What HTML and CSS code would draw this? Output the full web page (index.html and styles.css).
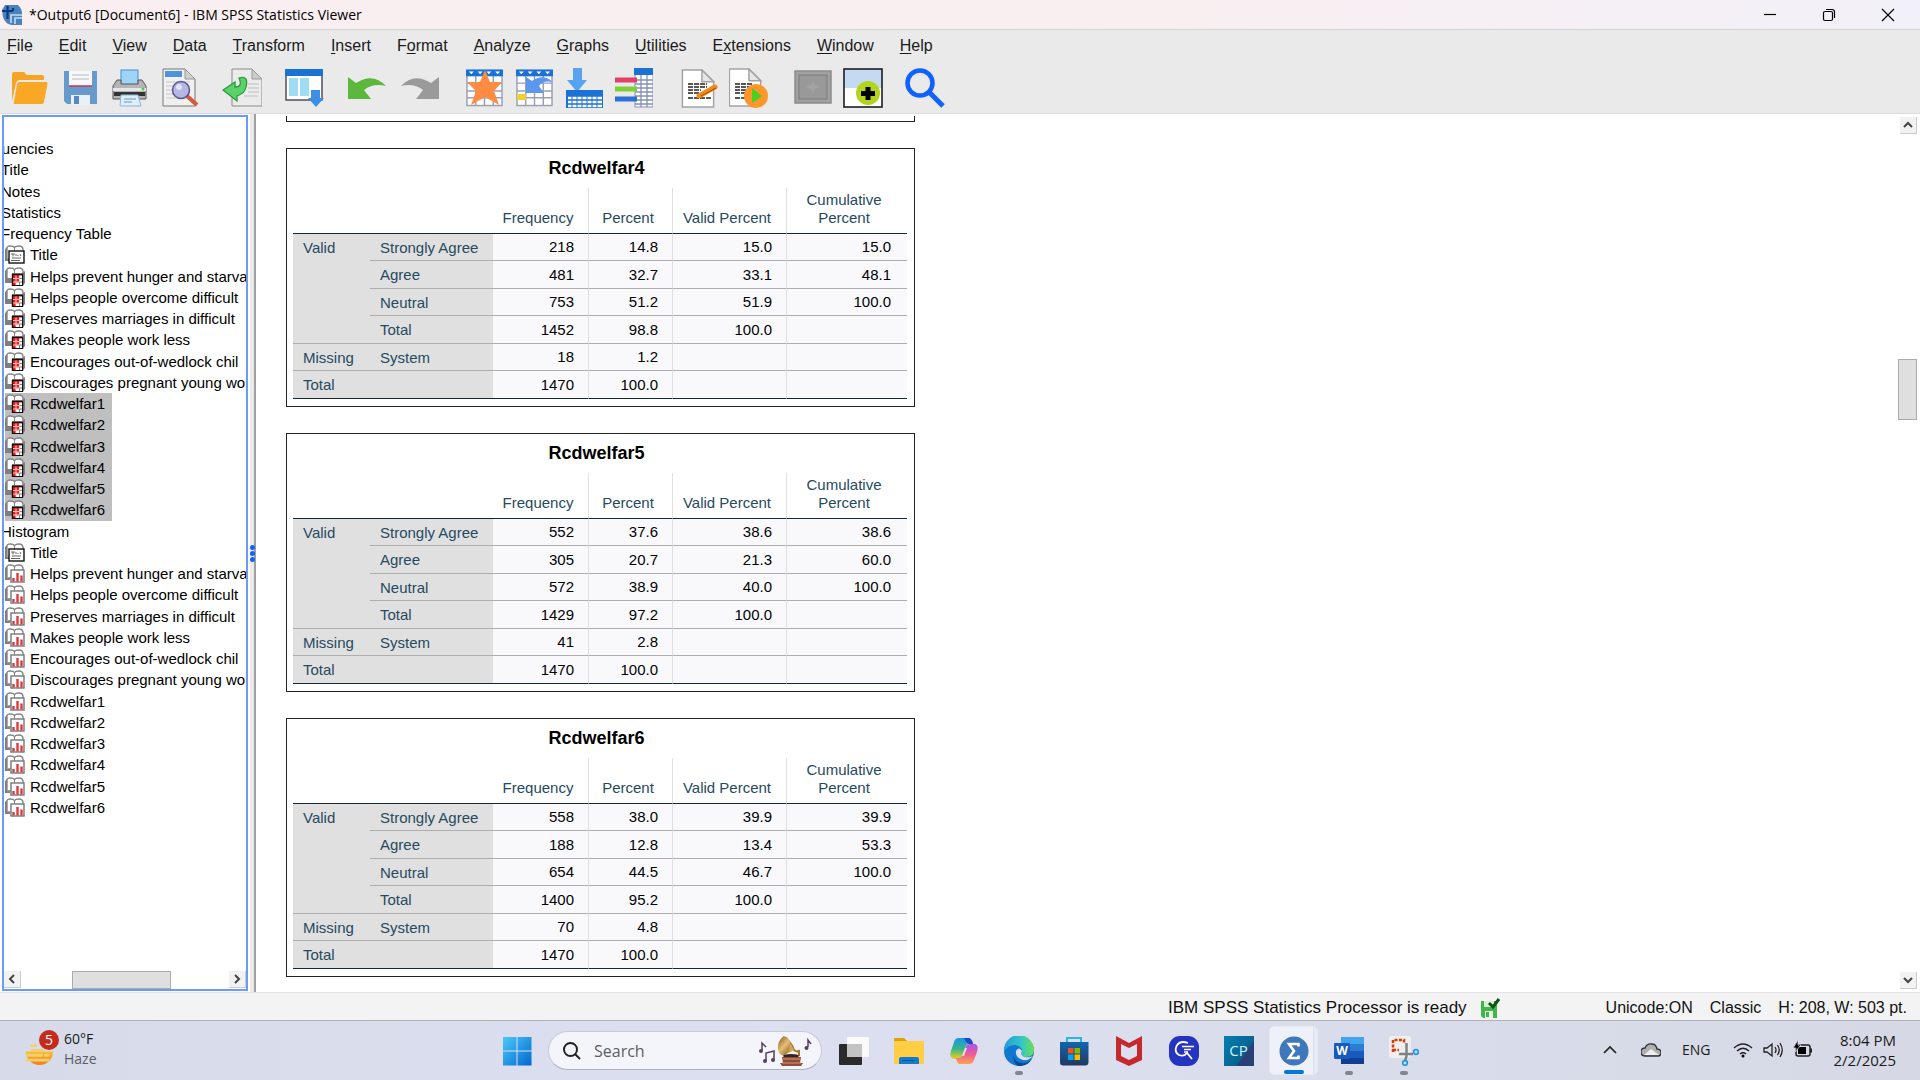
FILE: index.html
```html
<!DOCTYPE html>
<html lang="en">
  <head>
    <meta charset="UTF-8" />
    <meta name="viewport" content="width=device-width, initial-scale=1.0" />
    <title>*Output6 [Document6] - IBM SPSS Statistics Viewer</title>
    <link rel="stylesheet" href="styles.css">
  </head>
  <body>
    <!-- shared symbols -->
    <svg class="defs" aria-hidden="true">
      <symbol id="book" viewBox="0 0 20 19">
        <path d="M0 4 L2 2 V13 H5 V16 H0 Z" fill="#7f7f7f" />
        <path d="M2 13 V3 Q2 1 5 1 Q9 1 9.500 3 Q10 1 14 1 Q17.500 1 18 4 V14 H2" fill="#fff" stroke="#858585" stroke-width="1.400" />
        <path d="M9.500 3 V12" stroke="#858585" />
      </symbol>
      <symbol id="node-title" viewBox="0 0 20 19">
        <use href="#book" width="20" height="19" />
        <rect x="4" y="6" width="15" height="12" fill="#fff" stroke="#111" stroke-width="1.400" />
        <path d="M6 9 H10 M8 9 V11.500 M11 9 V11 M12.500 10 L13.500 11 M15 9 L16 11 M7 13 H16 M6 15.500 H15" stroke="#666" fill="none" />
      </symbol>
      <symbol id="node-table" viewBox="0 0 20 19">
        <use href="#book" width="20" height="19" />
        <path d="M0 11 H7 V16 H0 Z" fill="#7f7f7f" />
        <path d="M7 6 H17 L20 4 V16 L17 19 H7 Z" fill="#7f7f7f" />
        <rect x="7.500" y="7.500" width="10" height="11" fill="#ff1a1a" stroke="#111" stroke-width="1.400" />
        <path d="M14.500 8.500 H17 V18 H11 V15.500 H14.500 Z" fill="#fff" />
        <path d="M8 11.500 H17 M8 15 H17 M11 8.500 V18 M14.500 8.500 V18" stroke="#f4dede" stroke-width=".9" />
        <path d="M14.500 11.500 H17 M14.500 15 H17 M14.500 15 V18" stroke="#777" stroke-width=".9" />
      </symbol>
      <symbol id="node-chart" viewBox="0 0 20 19">
        <use href="#book" width="20" height="19" />
        <rect x="6" y="6" width="13" height="12" fill="#fff" stroke="#777" stroke-width="1.400" />
        <path d="M8.500 17.500 V14 M12.500 17.500 V9 M16.500 17.500 V11.500" stroke="#dd3b3b" stroke-width="2.400" />
      </symbol>
      <symbol id="grid" viewBox="0 0 38 38">
        <rect x="1" y="1" width="36" height="36" fill="#fff" stroke="#9a9fb5" stroke-width="1.500" />
        <path d="M1 14 H37 M1 22 H37 M1 29 H37 M10 5 V37 M19 5 V37 M28 5 V37" stroke="#9a9fb5" stroke-width="1.500" />
        <rect width="38" height="7" fill="#1a72d6" />
        <path d="M3 2 H8 L5.500 5 Z M12 2 H17 L14.500 5 Z M21 2 H26 L23.500 5 Z M30 2 H35 L32.500 5 Z" fill="#fff" />
      </symbol>
      <symbol id="paper" viewBox="0 0 34 40">
        <path d="M1 1 H21 L33 13 V39 H1 Z" fill="#fff" stroke="#a3a3a3" stroke-width="1.500" />
        <path d="M21 1 V13 H33 Z" fill="#e6e6e6" stroke="#a3a3a3" stroke-width="1.500" />
      </symbol>
    </svg>

    <header class="titlebar">
      <svg class="app-icon" viewBox="0 0 20 20">
        <path d="M3 0 H16 Q20 4 20 8 V20 H10 Q3 19 1 12 L0 5 Z" fill="#4a82bd" />
        <path d="M0 6 H11 M5.500 1 V14 M11 6 V3" stroke="#0d3a78" stroke-width="2.200" fill="none" />
        <path d="M9 18 V10 H20 M13 19 V13 H20" stroke="#c4dcf2" stroke-width="1.600" fill="none" />
      </svg>
      <h1>*Output6 [Document6] - IBM SPSS Statistics Viewer</h1>
      <div class="window-buttons">
        <button aria-label="Minimize"><svg viewBox="0 0 14 14"><path d="M1 6.500 H13" /></svg></button>
        <button aria-label="Restore"><svg viewBox="0 0 14 14"><rect x="1.500" y="3.500" width="9" height="9" rx="1.500" /><path d="M4 1.500 H10 Q12.500 1.500 12.500 4 V10" /></svg></button>
        <button aria-label="Close"><svg viewBox="0 0 14 14"><path d="M1 1 L13 13 M13 1 L1 13" /></svg></button>
      </div>
    </header>

    <nav class="menubar">
      <button><u>F</u>ile</button>
      <button><u>E</u>dit</button>
      <button><u>V</u>iew</button>
      <button><u>D</u>ata</button>
      <button><u>T</u>ransform</button>
      <button><u>I</u>nsert</button>
      <button>F<u>o</u>rmat</button>
      <button><u>A</u>nalyze</button>
      <button><u>G</u>raphs</button>
      <button><u>U</u>tilities</button>
      <button>E<u>x</u>tensions</button>
      <button><u>W</u>indow</button>
      <button><u>H</u>elp</button>
    </nav>

    <div class="toolbar">
      <div class="group">
        <button aria-label="Open">
          <svg viewBox="0 0 40 40">
            <path d="M2 33 V6 Q2 4 4 4 H14 L17 7 H32 Q34 7 34 9 V12 H10 Q7 12 6 15 Z" fill="#f7a325" />
            <path d="M9 14 H36 Q38 14 37.500 16 L34 34 Q33.500 36 32 36 H5 Q3 36 4 34 L7 16 Q7.500 14 9 14 Z" fill="#f9a826" />
          </svg>
        </button>
        <button aria-label="Save">
          <svg viewBox="0 0 40 40">
            <path d="M4 3 H37 V36 H7 L4 33 Z" fill="#6699cc" />
            <rect x="9" y="3" width="23" height="15" fill="#f6f8fa" />
            <path d="M12 7 H29 M12 11 H29" stroke="#c9ced3" stroke-width="1.500" />
            <path d="M9 18 H32" stroke="#cc3355" stroke-width="1.500" />
            <rect x="11" y="27" width="19" height="10" fill="#e8f0f8" />
            <rect x="14" y="28" width="5" height="8" fill="#5588c0" />
          </svg>
        </button>
        <button aria-label="Print">
          <svg viewBox="0 0 40 40">
            <rect x="11" y="2" width="17" height="15" fill="#9fd4f8" stroke="#4590cc" />
            <path d="M7 12 H11 V16 H28 V12 H32 L36 18 V31 H3 V18 Z" fill="#b5b5b5" stroke="#555" />
            <path d="M3 20 H36 V23 H3 Z" fill="#e6e6e6" />
            <path d="M4 26 H35" stroke="#333" stroke-width="4" />
            <path d="M11 27 H28 L31 38 H10 Z" fill="#dceefb" stroke="#8fb5d2" />
            <path d="M14 31 H26 M14 34 H22" stroke="#6d97b5" />
            <circle cx="33" cy="21" r="1.500" fill="#4c4" />
          </svg>
        </button>
        <button aria-label="Print Preview">
          <svg viewBox="0 0 40 40">
            <path d="M3 1 H25 L35 11 V38 H3 Z" fill="#f0f0f0" stroke="#777" />
            <path d="M25 1 V11 H35 Z" fill="#d0d0d0" stroke="#999" />
            <rect x="5" y="3" width="17" height="6" fill="#4b94dc" />
            <path d="M6 14 H30 M6 18 H30 M6 22 H30 M6 26 H28 M6 30 H28" stroke="#c9c9c9" />
            <path d="M27 28 L37 37" stroke="#d9583a" stroke-width="4" />
            <circle cx="21" cy="22" r="8.500" fill="#b4b6e4" stroke="#55568f" stroke-width="1.500" />
            <circle cx="19" cy="19" r="3" fill="#e3e4f8" />
          </svg>
        </button>
      </div>
      <div class="group">
        <button aria-label="Export">
          <svg viewBox="0 0 40 40">
            <path d="M10 1 H30 L40 11 V38 H10 Z" fill="#ebebeb" stroke="#8a8a8a" />
            <path d="M30 1 V11 H40 Z" fill="#ccc" stroke="#999" />
            <path d="M26 16 H37 M26 20 H37 M26 24 H37 M22 28 H36" stroke="#bdbdbd" />
            <path d="M17 10 Q27 7 24 19 Q23 25 15 28 V33 L1 22 L13 14 V19 Q21 19 17 10 Z" fill="#5bd268" stroke="#2a9a3c" stroke-width="1.300" />
          </svg>
        </button>
      </div>
      <div class="group">
        <button aria-label="Recall Dialog">
          <svg viewBox="0 0 40 40">
            <rect x="2" y="2" width="36" height="30" fill="#fff" stroke="#445" stroke-width="1.400" />
            <rect x="1" y="1" width="38" height="7" fill="#1a72d6" />
            <rect x="5" y="10" width="9" height="18" fill="#a0dcf4" />
            <rect x="16" y="10" width="9" height="18" fill="#a0dcf4" />
            <path d="M27 22 H36 V30 H40 L32 39 L24 30 H27 Z" fill="#3b8fe8" />
          </svg>
        </button>
      </div>
      <div class="group history">
        <button aria-label="Undo">
          <svg viewBox="0 0 40 40"><path d="M2 9 L10 15 Q27 4 40 18 Q27 15 18 22 L25 31 H2 Z" fill="#5bb83c" /></svg>
        </button>
        <button aria-label="Redo">
          <svg viewBox="0 0 40 40"><path d="M38 9 L30 15 Q13 4 0 18 Q13 15 22 22 L15 31 H38 Z" fill="#9a9a9a" /></svg>
        </button>
      </div>
      <div class="group">
        <button aria-label="Go to Data">
          <svg viewBox="0 0 40 40">
            <use href="#grid" x="3" y="1" width="37" height="38" />
            <path d="M22 2 L27 14 H39 L31 23 L36 37 L22 29 L8 37 L13 23 L4 14 H17 Z" fill="#ff8c42" />
          </svg>
        </button>
        <button aria-label="Go to Case">
          <svg viewBox="0 0 40 40">
            <use href="#grid" x="3" y="1" width="37" height="38" />
            <rect x="4" y="26" width="9" height="6" fill="#f0d030" />
            <path d="M13 9 L19 13 Q30 5 40 14 Q30 12 26 18 L31 25 H13 Z" fill="#5c97ec" />
          </svg>
        </button>
        <button aria-label="Go to Variable">
          <svg viewBox="0 0 40 40">
            <path d="M10 0 H19 V12 H24 L14 24 L4 12 H10 Z" fill="#58a3f0" />
            <rect x="3" y="22" width="37" height="18" fill="#1a72d6" />
            <path d="M5 30 H39 M5 34 H39 M5 38 H39" stroke="#fff" stroke-width="2.500" />
            <path d="M9 28 V40 M14 28 V40 M19 28 V40 M24 28 V40 M29 28 V40 M34 28 V40" stroke="#1a72d6" />
          </svg>
        </button>
        <button aria-label="Variables">
          <svg viewBox="0 0 40 40">
            <rect x="22" y="1" width="18" height="38" fill="#fff" stroke="#8490b5" />
            <path d="M22 12 H40 M22 16 H40 M22 20 H40 M22 24 H40 M22 28 H40 M22 32 H40 M22 36 H40 M28 7 V39 M34 7 V39" stroke="#8490b5" stroke-width="1.300" />
            <rect x="21" width="20" height="7" fill="#1a72d6" />
            <path d="M2 12 H24" stroke="#e24068" stroke-width="5" />
            <path d="M2 21 H24" stroke="#7cd038" stroke-width="5" />
            <path d="M2 31 H24" stroke="#2c6fd6" stroke-width="5" />
          </svg>
        </button>
      </div>
      <div class="group docs">
        <button aria-label="Edit Syntax">
          <svg viewBox="0 0 40 40">
            <use href="#paper" x="2" y="1" width="34" height="39" />
            <path d="M9 16 H28 M9 19 H28 M9 22 H22 M9 25 H20 M9 30 H32" stroke="#222" stroke-width="1.500" stroke-dasharray="5 1" />
            <path d="M20 28 L36 19" stroke="#f08a18" stroke-width="5" stroke-linecap="round" />
            <path d="M22 28 L37 20" stroke="#a34a12" />
          </svg>
        </button>
        <button aria-label="Run Script">
          <svg viewBox="0 0 40 40">
            <use href="#paper" x="-1" y="0" width="34" height="39" />
            <path d="M6 16 H24 M6 19 H22 M6 22 H20 M6 25 H18 M6 30 H20" stroke="#222" stroke-width="1.500" stroke-dasharray="5 1" />
            <circle cx="27" cy="28" r="12" fill="#ff962c" />
            <path d="M23 20 L33 28 L23 35 Z" fill="#46d21e" />
          </svg>
        </button>
      </div>
      <div class="group">
        <button aria-label="Designate Window" disabled>
          <svg viewBox="0 0 40 40">
            <rect x="2" y="3" width="36" height="32" fill="#a0a0a0" stroke="#8c8c8c" stroke-width="1.500" />
            <rect x="6" y="7" width="28" height="24" fill="#999" stroke="#7d7d7d" />
            <path d="M20 12 L22 17 L27 19 L22 21 L20 26 L18 21 L13 19 L18 17 Z" fill="#a3a3a3" />
          </svg>
        </button>
        <button aria-label="Insert">
          <svg viewBox="0 0 40 40">
            <rect x="1" y="1" width="38" height="38" fill="#fff" />
            <rect x="1" y="1" width="38" height="19" fill="#c4daf2" />
            <rect x="1" y="1" width="38" height="38" fill="none" stroke="#1c1c24" stroke-width="1.600" />
            <circle cx="25" cy="25" r="12" fill="#b4d41c" />
            <path d="M25 19 V32 M18 25.500 H32" stroke="#000" stroke-width="5" />
          </svg>
        </button>
      </div>
      <div class="group">
        <button aria-label="Search">
          <svg viewBox="0 0 40 40">
            <circle cx="15" cy="15" r="12.500" fill="none" stroke="#0f62fe" stroke-width="4.500" />
            <path d="M24 24 L38 38" stroke="#0f62fe" stroke-width="5" />
          </svg>
        </button>
      </div>
    </div>

    <main class="workspace">
      <aside class="outline">
        <ul class="tree">
          <li class="level-1"><span>Frequencies</span></li>
          <li class="level-2"><span>Title</span></li>
          <li class="level-2"><span>Notes</span></li>
          <li class="level-2"><span>Statistics</span></li>
          <li class="level-2"><span>Frequency Table</span></li>
          <li><span><svg><use href="#node-title" /></svg>Title</span></li>
          <li><span><svg><use href="#node-table" /></svg>Helps prevent hunger and starva</span></li>
          <li><span><svg><use href="#node-table" /></svg>Helps people overcome difficult</span></li>
          <li><span><svg><use href="#node-table" /></svg>Preserves marriages in difficult</span></li>
          <li><span><svg><use href="#node-table" /></svg>Makes people work less</span></li>
          <li><span><svg><use href="#node-table" /></svg>Encourages out-of-wedlock chil</span></li>
          <li><span><svg><use href="#node-table" /></svg>Discourages pregnant young wo</span></li>
          <li class="selected"><span><svg><use href="#node-table" /></svg>Rcdwelfar1</span></li>
          <li class="selected"><span><svg><use href="#node-table" /></svg>Rcdwelfar2</span></li>
          <li class="selected"><span><svg><use href="#node-table" /></svg>Rcdwelfar3</span></li>
          <li class="selected"><span><svg><use href="#node-table" /></svg>Rcdwelfar4</span></li>
          <li class="selected"><span><svg><use href="#node-table" /></svg>Rcdwelfar5</span></li>
          <li class="selected"><span><svg><use href="#node-table" /></svg>Rcdwelfar6</span></li>
          <li class="level-2"><span>Histogram</span></li>
          <li><span><svg><use href="#node-title" /></svg>Title</span></li>
          <li><span><svg><use href="#node-chart" /></svg>Helps prevent hunger and starva</span></li>
          <li><span><svg><use href="#node-chart" /></svg>Helps people overcome difficult</span></li>
          <li><span><svg><use href="#node-chart" /></svg>Preserves marriages in difficult</span></li>
          <li><span><svg><use href="#node-chart" /></svg>Makes people work less</span></li>
          <li><span><svg><use href="#node-chart" /></svg>Encourages out-of-wedlock chil</span></li>
          <li><span><svg><use href="#node-chart" /></svg>Discourages pregnant young wo</span></li>
          <li><span><svg><use href="#node-chart" /></svg>Rcdwelfar1</span></li>
          <li><span><svg><use href="#node-chart" /></svg>Rcdwelfar2</span></li>
          <li><span><svg><use href="#node-chart" /></svg>Rcdwelfar3</span></li>
          <li><span><svg><use href="#node-chart" /></svg>Rcdwelfar4</span></li>
          <li><span><svg><use href="#node-chart" /></svg>Rcdwelfar5</span></li>
          <li><span><svg><use href="#node-chart" /></svg>Rcdwelfar6</span></li>
        </ul>
        <div class="scroll-x">
          <button aria-label="Scroll left"><svg viewBox="0 0 10 10"><path d="M7 1 L3 5 L7 9" /></svg></button>
          <div class="track"><div class="thumb"></div></div>
          <button aria-label="Scroll right"><svg viewBox="0 0 10 10"><path d="M3 1 L7 5 L3 9" /></svg></button>
        </div>
      </aside>

      <div class="splitter"><i></i><i></i><i></i></div>

      <div class="output">
        <div class="pages">
          <div class="pivot previous"></div>

          <section class="pivot">
            <table>
              <caption>Rcdwelfar4</caption>
              <colgroup><col class="group-col"><col class="label-col"><col class="freq-col"><col class="percent-col"><col class="valid-col"><col></colgroup>
              <thead>
                <tr><td colspan="2"></td><th>Frequency</th><th>Percent</th><th>Valid Percent</th><th class="cumulative">Cumulative Percent</th></tr>
              </thead>
              <tbody>
                <tr><th rowspan="4">Valid</th><th>Strongly Agree</th><td>218</td><td>14.8</td><td>15.0</td><td>15.0</td></tr>
                <tr><th>Agree</th><td>481</td><td>32.7</td><td>33.1</td><td>48.1</td></tr>
                <tr><th>Neutral</th><td>753</td><td>51.2</td><td>51.9</td><td>100.0</td></tr>
                <tr><th>Total</th><td>1452</td><td>98.8</td><td>100.0</td><td></td></tr>
                <tr><th>Missing</th><th>System</th><td>18</td><td>1.2</td><td></td><td></td></tr>
                <tr><th colspan="2">Total</th><td>1470</td><td>100.0</td><td></td><td></td></tr>
              </tbody>
            </table>
          </section>

          <section class="pivot">
            <table>
              <caption>Rcdwelfar5</caption>
              <colgroup><col class="group-col"><col class="label-col"><col class="freq-col"><col class="percent-col"><col class="valid-col"><col></colgroup>
              <thead>
                <tr><td colspan="2"></td><th>Frequency</th><th>Percent</th><th>Valid Percent</th><th class="cumulative">Cumulative Percent</th></tr>
              </thead>
              <tbody>
                <tr><th rowspan="4">Valid</th><th>Strongly Agree</th><td>552</td><td>37.6</td><td>38.6</td><td>38.6</td></tr>
                <tr><th>Agree</th><td>305</td><td>20.7</td><td>21.3</td><td>60.0</td></tr>
                <tr><th>Neutral</th><td>572</td><td>38.9</td><td>40.0</td><td>100.0</td></tr>
                <tr><th>Total</th><td>1429</td><td>97.2</td><td>100.0</td><td></td></tr>
                <tr><th>Missing</th><th>System</th><td>41</td><td>2.8</td><td></td><td></td></tr>
                <tr><th colspan="2">Total</th><td>1470</td><td>100.0</td><td></td><td></td></tr>
              </tbody>
            </table>
          </section>

          <section class="pivot">
            <table>
              <caption>Rcdwelfar6</caption>
              <colgroup><col class="group-col"><col class="label-col"><col class="freq-col"><col class="percent-col"><col class="valid-col"><col></colgroup>
              <thead>
                <tr><td colspan="2"></td><th>Frequency</th><th>Percent</th><th>Valid Percent</th><th class="cumulative">Cumulative Percent</th></tr>
              </thead>
              <tbody>
                <tr><th rowspan="4">Valid</th><th>Strongly Agree</th><td>558</td><td>38.0</td><td>39.9</td><td>39.9</td></tr>
                <tr><th>Agree</th><td>188</td><td>12.8</td><td>13.4</td><td>53.3</td></tr>
                <tr><th>Neutral</th><td>654</td><td>44.5</td><td>46.7</td><td>100.0</td></tr>
                <tr><th>Total</th><td>1400</td><td>95.2</td><td>100.0</td><td></td></tr>
                <tr><th>Missing</th><th>System</th><td>70</td><td>4.8</td><td></td><td></td></tr>
                <tr><th colspan="2">Total</th><td>1470</td><td>100.0</td><td></td><td></td></tr>
              </tbody>
            </table>
          </section>
        </div>
        <div class="scroll-y">
          <button aria-label="Scroll up"><svg viewBox="0 0 10 10"><path d="M1 7 L5 3 L9 7" /></svg></button>
          <div class="track"><div class="thumb"></div></div>
          <button aria-label="Scroll down"><svg viewBox="0 0 10 10"><path d="M1 3 L5 7 L9 3" /></svg></button>
        </div>
      </div>
    </main>

    <footer class="statusbar">
      <span class="processor">IBM SPSS Statistics Processor is ready</span>
      <svg class="saved" viewBox="0 0 20 20">
        <path d="M0 3 H16 V20 H2 L0 18 Z" fill="#3fb54a" />
        <rect x="3" y="3" width="10" height="6" fill="#d5f0d5" />
        <rect x="4" y="13" width="8" height="7" fill="#e6f5e6" />
        <rect x="5" y="14" width="3" height="5" fill="#3fb54a" />
        <path d="M8 5 L12 9 L18 1" stroke="#0c5216" stroke-width="3" fill="none" />
      </svg>
      <div class="status-right">
        <span>Unicode:ON</span>
        <span>Classic</span>
        <span>H: 208, W: 503 pt.</span>
      </div>
    </footer>

    <div class="taskbar">
      <button class="weather">
        <span class="weather-icon">
          <svg viewBox="0 0 30 36">
            <defs>
              <linearGradient id="sun" x1="0" y1="0" x2="0" y2="1"><stop offset="0" stop-color="#fbc02d" /><stop offset="1" stop-color="#f57c14" /></linearGradient>
            </defs>
            <path d="M1 20 H29 A14 14 0 0 1 1 20 Z" fill="url(#sun)" />
            <path d="M7 14 H11 M7 19 H19 M2 24 H17 M21 24 H24 M2 29 H24" stroke="#f2cf70" stroke-width="3" stroke-linecap="round" />
          </svg>
          <b class="badge">5</b>
        </span>
        <span class="weather-text"><span>60°F</span><small>Haze</small></span>
      </button>

      <div class="apps">
        <button class="app" aria-label="Start">
          <svg viewBox="0 0 30 30">
            <defs><linearGradient id="win" x1="0" y1="0" x2="1" y2="1"><stop offset="0" stop-color="#4cc8fb" /><stop offset="1" stop-color="#0268cd" /></linearGradient></defs>
            <path d="M1 1 H14.500 V14.500 H1 Z M15.500 1 H29.500 V14.500 H15.500 Z M1 15.500 H14.500 V29.500 H1 Z M15.500 15.500 H29.500 V29.500 H15.500 Z" fill="url(#win)" />
          </svg>
        </button>
        <label class="search">
          <svg class="glass" viewBox="0 0 18 18"><circle cx="7.500" cy="7.500" r="6.500" /><path d="M12 12 L17 17" /></svg>
          <input type="text" placeholder="Search" aria-label="Search" />
          <svg class="gramophone" viewBox="0 0 54 32">
            <defs><linearGradient id="horn" x1="0" y1="0" x2="1" y2="1"><stop offset="0" stop-color="#8a5a1e" /><stop offset=".5" stop-color="#e5bf76" /><stop offset="1" stop-color="#8a5f20" /></linearGradient></defs>
            <path d="M4 15 V8 L8 12 M8 26 V18 L16 16 V25" stroke="#54405c" stroke-width="1.500" fill="none" />
            <circle cx="3" cy="16" r="2" fill="#54405c" /><circle cx="7" cy="26" r="2" fill="#54405c" /><circle cx="15" cy="25" r="2" fill="#54405c" />
            <path d="M50 12 V5 L53 9" stroke="#54405c" stroke-width="1.500" fill="none" /><circle cx="48.500" cy="13" r="2" fill="#54405c" />
            <path d="M25 2 Q33 6 36 15 Q40 18 41 15 V21" stroke="#a9762c" stroke-width="2" fill="none" />
            <path d="M25 2 Q32 5 36 15 Q30 19 25 20 Z" fill="#d3a656" />
            <ellipse cx="26" cy="11" rx="6" ry="9.500" fill="url(#horn)" transform="rotate(10 26 11)" />
            <ellipse cx="33" cy="21" rx="8" ry="2" fill="#33241e" />
            <path d="M24 22 H43 L42 28 H45 L43 31 H24 L22 28 H25 Z" fill="#8e4f34" />
            <path d="M25 24 H42 M24 28 H43" stroke="#d09a7a" />
          </svg>
        </label>
        <button class="app" aria-label="Task View">
          <svg viewBox="0 0 30 30">
            <rect y="8" width="23" height="21" rx="1" fill="#2b2b2b" />
            <rect x="8" y="1" width="22" height="20" rx="1" fill="#fafafa" />
            <rect x="8" y="8" width="15" height="13" fill="#c3c3c3" />
          </svg>
        </button>
        <button class="app" aria-label="File Explorer">
          <svg viewBox="0 0 30 30">
            <path d="M0 3 Q0 2 1 2 H10 L13 5 V9 H0 Z" fill="#e09f0a" />
            <rect y="5" width="30" height="23" rx="1" fill="#ffce45" />
            <path d="M5 28 V23 Q5 21 7 21 H23 Q25 21 25 23 V28 Z" fill="#0f7ccf" />
            <path d="M8 24.500 H21" stroke="#0a4f90" />
          </svg>
        </button>
        <button class="app" aria-label="Copilot">
          <svg viewBox="0 0 30 30">
            <defs>
              <linearGradient id="cop1" x1="0" y1="0" x2="0" y2="1"><stop offset="0" stop-color="#1797e8" /><stop offset=".5" stop-color="#36b58a" /><stop offset="1" stop-color="#f2cf1d" /></linearGradient>
              <linearGradient id="cop2" x1="0" y1="0" x2="0" y2="1"><stop offset="0" stop-color="#a259ee" /><stop offset=".5" stop-color="#ee5a97" /><stop offset="1" stop-color="#fca350" /></linearGradient>
            </defs>
            <path d="M10 2 H20 Q23 3 24 8 H20 Q17 8 16 12 L13 21 Q12 24 8 23 H4 Q0 21 2 15 L5 6 Q6 2 10 2 Z" fill="url(#cop1)" />
            <path d="M15 2 H20 Q23 3 24 8 H20 Q17 7 15 2 Z" fill="#2048c8" />
            <path d="M21 8 H26 Q30 9 28 16 L25 24 Q24 28 20 28 H10 Q8 27 7 22 H10 Q13 22 14 18 L17 10 Q18 8 21 8 Z" fill="url(#cop2)" />
            <path d="M16 12 H18 L15 20 H13 Z" fill="#dcdff0" />
          </svg>
        </button>
        <button class="app running" aria-label="Edge">
          <svg viewBox="0 0 30 30">
            <defs>
              <linearGradient id="edge1" x1="0" y1="0" x2="1" y2="0"><stop offset="0" stop-color="#1f9be0" /><stop offset=".6" stop-color="#35c7c4" /><stop offset="1" stop-color="#6be04c" /></linearGradient>
            </defs>
            <circle cx="15" cy="15" r="15" fill="#1078cf" />
            <path d="M0 14 A15 15 0 0 1 30 14 Q30 21 22 21 Q17 21 18 17 Q19 10 11 9 Q4 9 0 15 Z" fill="url(#edge1)" />
            <path d="M10 18 Q9 26 18 27 Q23 28 28 23 A15 15 0 0 1 14 30 Q8 26 10 18 Z" fill="#0c4a94" />
            <path d="M18 15 Q15 10 12 15 Q11 22 19 24 Q25 25 29 20 Q25 22 21 21 Q16 20 18 15 Z" fill="#dcdff0" />
          </svg>
        </button>
        <button class="app" aria-label="Microsoft Store">
          <svg viewBox="0 0 30 30">
            <defs><linearGradient id="store" x1="0" y1="0" x2="0" y2="1"><stop offset="0" stop-color="#1265ae" /><stop offset="1" stop-color="#22395f" /></linearGradient></defs>
            <path d="M8 7 V2 H22 V7" fill="none" stroke="#27b7ee" stroke-width="2" />
            <path d="M1 6 H29.500 V26 Q29.500 29.500 26 29.500 H4 Q1 29.500 1 26 Z" fill="url(#store)" />
            <rect x="9" y="12" width="5.500" height="5.500" fill="#f25022" /><rect x="15.500" y="12" width="5.500" height="5.500" fill="#7fba00" />
            <rect x="9" y="18.500" width="5.500" height="5.500" fill="#00a4ef" /><rect x="15.500" y="18.500" width="5.500" height="5.500" fill="#ffb900" />
          </svg>
        </button>
        <button class="app" aria-label="McAfee">
          <svg viewBox="0 0 30 30">
            <path d="M2 0 L15 7 L28 0 V24 L15 30 L2 24 Z" fill="#c6282c" />
            <path d="M7 8 L15 12 L23 8 V20 L15 24 L7 20 Z" fill="#dcdff0" />
          </svg>
        </button>
        <button class="app" aria-label="Quick Search">
          <svg viewBox="0 0 30 30">
            <rect width="30" height="30" rx="11" fill="#2433c0" />
            <path d="M19 7 Q11 4 7.500 10 Q5 16 10 19 Q15 21 18 17 L23 23" stroke="#fff" stroke-width="1.800" fill="none" />
            <path d="M13 10.500 H25 M15 13.500 H22 M15 16 H19" stroke="#fff" stroke-width="1.300" />
          </svg>
        </button>
        <button class="app" aria-label="CP"><span class="cp">CP</span></button>
        <button class="app active" aria-label="SPSS Statistics">
          <svg viewBox="0 0 30 30">
            <circle cx="15" cy="15" r="14.500" fill="#3f78ba" />
            <path d="M19.500 10.500 V8 H10 L15 15 L10 22 H19.500 V19.500" stroke="#fff" stroke-width="2.600" fill="none" />
          </svg>
        </button>
        <button class="app running" aria-label="Word">
          <svg viewBox="0 0 30 30">
            <rect x="7" y="1" width="23" height="7" fill="#41a5ee" /><rect x="7" y="8" width="23" height="7" fill="#2b7cd3" />
            <rect x="7" y="15" width="23" height="7" fill="#185abd" /><rect x="7" y="22" width="23" height="6" fill="#103f91" />
            <rect y="7" width="16" height="16" rx="1" fill="#185abd" />
            <text x="8" y="19" class="word-letter">W</text>
          </svg>
        </button>
        <button class="app running" aria-label="Snipping Tool">
          <svg viewBox="0 0 30 30">
            <rect width="22" height="22" rx="3" fill="#f1efee" />
            <path d="M4 16 V4 H15 V8" fill="none" stroke="#d83b01" stroke-width="2.500" stroke-dasharray="3 1.500" />
            <path d="M4 14 H10" stroke="#d83b01" stroke-width="2.500" stroke-dasharray="3 1.500" />
            <path d="M17.500 7 V20 L16 25 M10 18 H24" stroke="#7d8287" stroke-width="2.500" fill="none" />
            <circle cx="16" cy="27" r="2.300" fill="none" stroke="#1a9be0" stroke-width="1.700" />
            <circle cx="27" cy="16" r="2.300" fill="none" stroke="#1a9be0" stroke-width="1.700" />
          </svg>
        </button>
      </div>

      <div class="tray">
        <button aria-label="Show hidden icons"><svg viewBox="0 0 20 20"><path d="M4 13 L10 7 L16 13" fill="none" stroke="#222" stroke-width="1.700" /></svg></button>
        <button aria-label="OneDrive">
          <svg viewBox="0 0 20 20">
            <path d="M4 16 Q0 16 0 12 Q0 8 4 8 Q6 3 11 4 Q15 4 16 9 Q20 9 20 13 Q20 16 17 16 Z" fill="#b0b0b0" stroke="#333" stroke-width="1.400" />
            <path d="M3 15 L10 9 L18 15 Z" fill="#eee" />
          </svg>
        </button>
        <span class="lang">ENG</span>
        <button class="system" aria-label="Network, volume and battery">
          <svg viewBox="0 0 20 20"><path d="M1 8 Q10 0 19 8 M4 11 Q10 5.500 16 11 M7 14 Q10 11.500 13 14" fill="none" stroke="#222" stroke-width="1.500" /><circle cx="10" cy="16" r="1.500" /></svg>
          <svg viewBox="0 0 20 20"><path d="M1 8 H4 L9 4 V16 L4 12 H1 Z M12 7 Q14 10 12 13 M14.500 5 Q18 10 14.500 15 M17 3 Q21.500 10 17 17" fill="none" stroke="#222" stroke-width="1.300" /></svg>
          <svg viewBox="0 0 20 20"><rect x="3" y="5" width="14" height="11" rx="2" fill="none" stroke="#222" stroke-width="1.500" /><rect x="5" y="7" width="8" height="7" /><path d="M18 8.500 V12.500" stroke="#222" stroke-width="2" /><path d="M5 0 L0 8 H3 L2 12 L8 5 H5 Z" stroke="#d9dce9" stroke-width=".8" /></svg>
        </button>
        <div class="clock"><span>8:04 PM</span><span>2/2/2025</span></div>
      </div>
    </div>
  </body>
</html>
```
FILE: styles.css
```css
* {
  box-sizing: border-box;
}

body {
  margin: 0;
  height: 100vh;
  display: flex;
  flex-direction: column;
  overflow: hidden;
  font-family: "Liberation Sans", Arial, sans-serif;
  font-size: 15px;
  color: #1a1a1a;
  background: #fff;
}

button {
  padding: 0;
  border: none;
  background: none;
  font: inherit;
  color: inherit;
}

svg {
  display: block;
}

.defs {
  position: absolute;
  width: 0;
  height: 0;
}

/* Title bar */
.titlebar {
  flex: none;
  display: flex;
  align-items: center;
  height: 30px;
  padding-left: 2px;
  border-bottom: 1px solid #d2d2d2;
  background: linear-gradient(90deg, #faeff0, #f9eff1 60%, #f2f0f8);
}

.app-icon {
  width: 20px;
  height: 20px;
}

.titlebar h1 {
  flex: 1;
  margin: 0 0 0 7px;
  font: 14px "Open Sans", sans-serif;
  color: #000;
}

.window-buttons {
  display: flex;
}

.window-buttons button {
  width: 59px;
  display: grid;
  place-items: center;
}

.window-buttons button:last-child {
  margin-right: 3px;
}

.window-buttons svg {
  width: 14px;
  height: 14px;
  fill: none;
  stroke: #000;
  stroke-width: 1.2;
}

/* Menu and toolbar */
.menubar {
  flex: none;
  display: flex;
  gap: 26px;
  height: 32px;
  padding-left: 7px;
  font-size: 16px;
  background: #eaeaea;
}

.menubar u {
  text-underline-offset: 2px;
}

.toolbar {
  flex: none;
  display: flex;
  gap: 22px;
  height: 52px;
  padding: 6px 10px 0;
  border-bottom: 1px solid #dcdcdc;
  background: #eaeaea;
}

.group {
  display: flex;
  align-items: flex-start;
  gap: 10px;
}

.group.history {
  gap: 15px;
}

.group.docs {
  margin: 0 2px 0 4px;
}

.group svg {
  width: 40px;
  height: 40px;
}

/* Outline pane */
.workspace {
  flex: 1;
  display: flex;
  min-height: 0;
}

.outline {
  flex: none;
  display: flex;
  flex-direction: column;
  width: 246px;
  margin: 1px 0 1px 2px;
  border: 1px solid #6a9bfa;
  outline: 1px solid #6a9bfa;
  outline-offset: -2px;
  overflow: hidden;
  color: #000;
}

.tree {
  display: grid;
  grid-auto-rows: 1fr;
  height: 680px;
  margin: 22px 0 auto -32px;
  padding: 0;
  list-style: none;
  white-space: nowrap;
}

.tree li {
  display: flex;
  padding-left: 34px;
}

.tree .level-1 {
  padding-left: 0;
}

.tree .level-2 {
  padding-left: 30px;
}

.tree span {
  display: flex;
  align-items: center;
  padding-right: 7px;
}

.tree svg {
  width: 20px;
  height: 19px;
  margin-right: 5px;
}

.selected span {
  background: #bfbfbf;
}

.scroll-x {
  display: flex;
  height: 20px;
  padding: 1px;
}

.scroll-x button,
.scroll-y button {
  display: grid;
  place-items: center;
  width: 17px;
  height: 17px;
  background: #f2f2f2;
  border-right: 1px solid #ccc;
  border-bottom: 1px solid #ccc;
}

.scroll-x svg,
.scroll-y svg {
  width: 10px;
  height: 10px;
  fill: none;
  stroke: #444;
  stroke-width: 2;
}

.track {
  flex: 1;
}

.thumb {
  border: 1px solid #ababab;
  background: #dfdfdf;
}

.scroll-x .thumb {
  width: 99px;
  height: 18px;
  margin-left: 51px;
}

.splitter {
  flex: none;
  display: flex;
  flex-direction: column;
  align-items: center;
  justify-content: center;
  gap: 1px;
  width: 8px;
  background: linear-gradient(90deg, #fff 2px, #eaeaea 2px, #eaeaea 6px, #a0a0a0 6px);
}

.splitter i {
  width: 5px;
  height: 5px;
  border-radius: 50%;
  background: #0f62fe;
}

/* Output pane */
.output {
  flex: 1;
  display: flex;
  padding-top: 2px;
}

.pages {
  flex: 1;
  padding-left: 30px;
}

.pivot {
  width: 629px;
  height: 259px;
  margin-bottom: 26px;
  padding: 1px 7px 0 6px;
  border: 1px solid #222;
}

.pivot.previous {
  height: 6px;
  border-top: none;
}

.pivot table {
  width: 100%;
  table-layout: fixed;
  border-spacing: 0;
  line-height: 18px;
}

.pivot caption {
  height: 38px;
  padding-right: 7px;
  font-size: 18px;
  font-weight: bold;
  line-height: 36px;
  color: #000;
}

.group-col {
  width: 77px;
}

.label-col {
  width: 123px;
}

.freq-col {
  width: 96px;
}

.percent-col {
  width: 84px;
}

.valid-col {
  width: 114px;
}

.pivot th {
  font-weight: normal;
  color: #264a60;
}

.pivot td,
.pivot th {
  padding: 0;
}

.pivot thead td {
  border-bottom: 1px solid #152935;
}

.pivot thead th {
  height: 46px;
  padding: 0 5px 6px 0;
  vertical-align: bottom;
  border-bottom: 1px solid #152935;
  border-right: 1px solid #e0e0e0;
}

.pivot thead th.cumulative {
  padding: 0 18px 6px 12px;
  border-right: none;
}

.pivot tbody tr {
  height: 27px;
}

.pivot tbody tr:nth-child(even) {
  height: 28px;
}

.pivot tbody th {
  padding: 5px 0 0 10px;
  text-align: left;
  vertical-align: top;
  background: #e0e0e0;
  border-bottom: 1px solid #aeaeae;
}

.pivot tbody td {
  padding-right: 14px;
  text-align: right;
  color: #010205;
  background: #f9f9fb;
  border-bottom: 1px solid #aeaeae;
  border-right: 1px solid #e0e0e0;
}

.pivot tbody td:last-child {
  padding-right: 16px;
  border-right: none;
}

.pivot tbody tr:last-child > * {
  border-bottom: 1px solid #152935;
}

.scroll-y {
  display: flex;
  flex-direction: column;
  width: 22px;
  padding: 1px 0 3px;
}

.scroll-y button {
  margin-left: 2px;
}

.scroll-y .thumb {
  width: 19px;
  height: 61px;
  margin-top: 225px;
}

/* Status bar */
.statusbar {
  flex: none;
  display: flex;
  align-items: center;
  height: 29px;
  padding: 2px 13px 0 0;
  border-top: 1px solid #e4e4e4;
  border-bottom: 1px solid #b0b0bc;
  font-size: 16px;
  color: #111;
  background: #f3f3f3;
}

.processor {
  margin-left: auto;
  font-size: 17px;
}

.saved {
  width: 20px;
  height: 20px;
  margin-left: 14px;
}

.status-right {
  display: flex;
  gap: 17px;
  margin-left: 105px;
}

/* Taskbar */
.taskbar {
  flex: none;
  display: grid;
  grid-template-columns: 1fr auto 1fr;
  height: 59px;
  font-family: "Open Sans", sans-serif;
  font-size: 14px;
  background: linear-gradient(90deg, #d7dbe9, #dcdff0 40%, #dadeed 60%, #d6d9e5);
}

.weather {
  justify-self: start;
  display: flex;
  align-items: center;
  gap: 10px;
  padding: 0 0 3px 25px;
  text-align: left;
}

.weather-icon {
  position: relative;
}

.weather-icon svg {
  width: 29px;
  height: 35px;
}

.badge {
  position: absolute;
  top: -2px;
  right: -5px;
  width: 20px;
  height: 20px;
  border-radius: 50%;
  line-height: 20px;
  text-align: center;
  font-weight: normal;
  color: #fff;
  background: #c42b1c;
}

.weather-text {
  display: flex;
  flex-direction: column;
  line-height: 20px;
}

.weather-text small {
  font-size: 14px;
  color: #5b5d66;
}

.apps {
  display: flex;
  align-items: center;
}

.app {
  position: relative;
  display: grid;
  place-items: center;
  width: 55px;
  height: 49px;
}

.app svg {
  width: 30px;
  height: 30px;
}

.app.running::after,
.app.active::after {
  content: "";
  position: absolute;
  bottom: 0;
  left: 24px;
  width: 8px;
  height: 4px;
  border-radius: 2px;
  background: #83848c;
}

.app.active::after {
  left: 14px;
  width: 20px;
  background: #0078d7;
}

.app.active {
  width: 49px;
  margin: 0 3px;
  border: 1px solid #e6e8f3;
  border-radius: 5px;
  background: linear-gradient(90deg, #eff1f8 43px, #d9dcea 43px, #e9ebf5 45px);
}

.cp {
  width: 30px;
  height: 30px;
  font-size: 15px;
  line-height: 29px;
  text-align: center;
  color: #d4f1fa;
  background: linear-gradient(125deg, #0580b4, #07628f 65%, #2a3f74 66%);
}

.word-letter {
  font: bold 12px "Open Sans", sans-serif;
  text-anchor: middle;
  fill: #fff;
}

.search {
  display: flex;
  align-items: center;
  width: 274px;
  height: 39px;
  margin: 0 4px;
  padding: 0 9px 0 14px;
  border: 1px solid #c9cbdc;
  border-bottom-color: #aeb0c2;
  border-radius: 20px;
  background: #f4f5fb;
}

.search input {
  flex: 1;
  min-width: 0;
  margin-left: 13px;
  padding: 0;
  border: none;
  outline: none;
  font: 16px "Open Sans", sans-serif;
  background: none;
}

.search input::placeholder {
  color: #5c5d64;
}

.glass {
  width: 18px;
  height: 18px;
  fill: none;
  stroke: #222;
  stroke-width: 2;
}

.gramophone {
  width: 54px;
  height: 32px;
}

.tray {
  justify-self: end;
  display: flex;
  align-items: center;
  padding: 0 24px 2px 0;
}

.tray button {
  margin-right: 21px;
}

.tray svg {
  width: 20px;
  height: 20px;
}

.lang {
  margin-right: 22px;
}

.tray .system {
  display: flex;
  gap: 10px;
}

.clock {
  display: flex;
  flex-direction: column;
  font-size: 15px;
  line-height: 20px;
  text-align: right;
}
```
